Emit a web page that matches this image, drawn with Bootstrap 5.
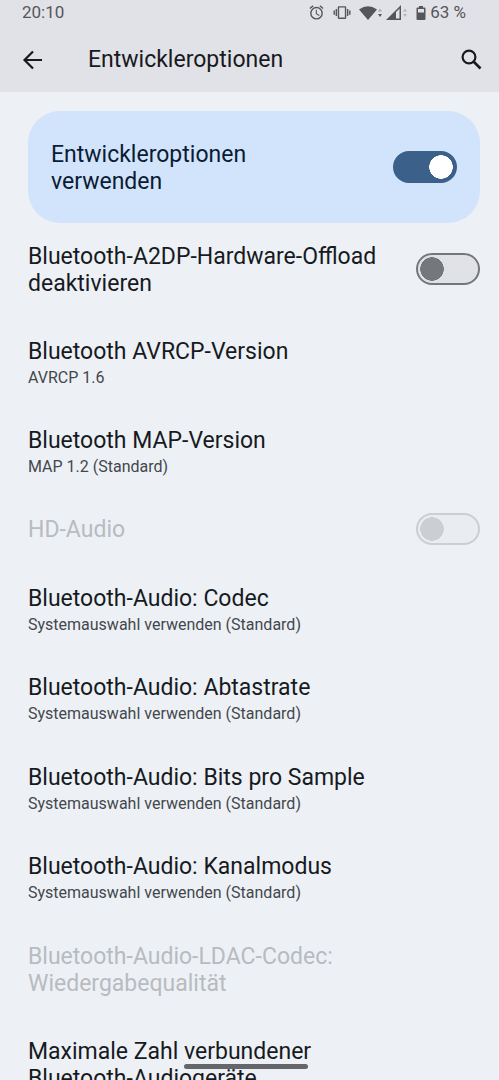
<!DOCTYPE html>
<html lang="de">
<head>
<meta charset="utf-8">
<meta name="viewport" content="width=device-width, initial-scale=1">
<title>Entwickleroptionen</title>
<link href="https://cdn.jsdelivr.net/npm/bootstrap@5.3.0/dist/css/bootstrap.min.css" rel="stylesheet">
<script src="https://cdn.jsdelivr.net/npm/bootstrap@5.3.0/dist/js/bootstrap.bundle.min.js" defer></script>
<style>
  body { background: #edf1f6; color: #171a1e; font-family: Roboto, "Noto Sans", sans-serif; }
  .top-area { background: #e1e2e7; }
  .status-bar { height: 25px; padding: 0 33px 0 22px; font-size: 17px; line-height: 25px; color: #55565a; }
  .status-bar svg { display: block; }
  .app-bar { height: 67px; padding: 2px 17px 0 22px; }
  .app-bar h1 { margin-left: 45px; }
  .app-bar svg { display: block; }
  .title-text { font-size: 23px; line-height: 27px; font-weight: 400; }
  .sub-text { font-size: 16px; line-height: 17px; margin-top: 4px; color: #44474c; }
  .master { margin: 19px 19px 0 28px; padding: 28px 23px; border-radius: 32px; background: #d2e4fc; color: #0a1c33; }
  .master label { max-width: 240px; padding-top: 2px; }
  .groups { gap: 1px; }
  .setting { padding: 20px 19px 21px 28px; background: transparent; border: 0; border-radius: 0; color: inherit; }
  .setting label { max-width: 360px; }
  .setting:disabled, .setting.off { color: #b8bbc0; }
  .form-check-input.toggle {
    width: 64px; height: 32px; margin: 0; border: 2px solid #74777c; border-radius: 16px;
    background: #e1e2e7 radial-gradient(circle closest-side, #74777c 96%, transparent) 2px center / 24px 24px no-repeat;
  }
  .setting .form-check-input.toggle { margin-bottom: 3px; }
  .form-check-input.toggle:checked {
    border-color: #3b618b;
    background: #3b618b radial-gradient(circle closest-side, #fff 96%, transparent) 34px center / 24px 24px no-repeat;
  }
  .form-check-input.toggle:disabled {
    opacity: 1; border-color: #cbced3;
    background: #e9ecf1 radial-gradient(circle closest-side, #cbced3 96%, transparent) 2px center / 24px 24px no-repeat;
  }
  .home-bar { bottom: 11px; padding-right: 8px; }
  .home-pill { width: 124px; height: 5px; background: #65666a; }
</style>
</head>
<body class="vh-100 overflow-hidden">
<header class="top-area">
  <div class="status-bar d-flex justify-content-between align-items-center">
    <span>20:10</span>
    <div class="d-flex align-items-center">
      <svg class="me-2" width="17" height="17" viewBox="0 0 24 24" fill="#55565a" aria-hidden="true"><path d="M22 5.7l-4.6-3.9-1.3 1.5 4.6 3.9zM7.9 3.4L6.6 1.9 2 5.7l1.3 1.5zM12.5 8H11v6l4.7 2.9.8-1.3-4-2.3zM12 4a9 9 0 1 0 0 18 9 9 0 0 0 0-18zm0 16a7 7 0 1 1 0-14 7 7 0 0 1 0 14z"/></svg>
      <svg class="me-2" width="18" height="17" viewBox="0 0 24 24" fill="#55565a" aria-hidden="true"><path d="M0 15h2V9H0zm3 2h2V7H3zm19-8v6h2V9zm-3 8h2V7h-2zM16.500 3h-9C6.700 3 6 3.700 6 4.500v15c0 .8.7 1.500 1.500 1.500h9c.8 0 1.500-.7 1.500-1.500v-15c0-.8-.7-1.500-1.500-1.500zM16 19H8V5h8z"/></svg>
      <svg width="27" height="16" viewBox="0 0 27 16" fill="#55565a" aria-hidden="true"><path d="M0 4.500Q9 -2 18 4.500L9 15z"/><path d="M19 6.500l2-3 2 3z" fill="#a9aaae"/><path d="M19 9h4l-2 3z"/></svg>
      <svg width="30" height="16" viewBox="0 0 30 16" fill="#55565a" aria-hidden="true"><path d="M0 15L15 0v15zM10 7v6.500h3.500V3.500z" fill-rule="evenodd"/><path d="M17 6.500l2-3 2 3zM17 9h4l-2 3z" fill="#b4b5b9"/></svg>
      <svg class="me-1" width="10" height="16" viewBox="0 0 10 16" fill="#55565a" aria-hidden="true"><path fill-rule="evenodd" d="M3 1h4v1.500h1.500q1 0 1 1V14q0 1-1 1h-7q-1 0-1-1V3.500q0-1 1-1H3zM2 4v3.500h6V4z"/></svg>
      <span>63 %</span>
    </div>
  </div>
  <div class="app-bar d-flex align-items-center">
    <button type="button" class="btn p-0 border-0" aria-label="Zurück">
      <svg width="21" height="20" viewBox="0 0 21 20" fill="none" stroke="#171a1e" stroke-width="2.200" aria-hidden="true"><path d="M20 10H3M11 1.500L2.500 10l8.500 8.500"/></svg>
    </button>
    <h1 class="title-text mb-0 flex-grow-1">Entwickleroptionen</h1>
    <button type="button" class="btn p-0 border-0" aria-label="Suchen">
      <svg width="21" height="21" viewBox="0 0 21 21" fill="none" stroke="#171a1e" stroke-width="2.200" aria-hidden="true"><circle cx="8" cy="8" r="6.400"/><path d="M12.500 12.500l7 7" stroke-width="2.600"/></svg>
    </button>
  </div>
</header>
<main>
  <div class="master d-flex align-items-center justify-content-between">
    <label class="title-text" for="sw-dev">Entwickleroptionen verwenden</label>
    <input class="form-check-input toggle flex-shrink-0" type="checkbox" role="switch" id="sw-dev" checked>
  </div>
  <div class="groups d-flex flex-column">
    <section>
      <div class="setting d-flex align-items-center justify-content-between">
        <label class="title-text" for="sw-offload">Bluetooth-A2DP-Hardware-Offload deaktivieren</label>
        <input class="form-check-input toggle flex-shrink-0" type="checkbox" role="switch" id="sw-offload">
      </div>
      <button type="button" class="setting d-block w-100 text-start">
        <span class="title-text d-block">Bluetooth AVRCP-Version</span>
        <span class="sub-text d-block">AVRCP 1.6</span>
      </button>
      <button type="button" class="setting d-block w-100 text-start">
        <span class="title-text d-block">Bluetooth MAP-Version</span>
        <span class="sub-text d-block">MAP 1.2 (Standard)</span>
      </button>
      <div class="setting off py-0 d-flex align-items-center justify-content-between">
        <label class="title-text setting px-0" for="sw-hd">HD-Audio</label>
        <input class="form-check-input toggle flex-shrink-0" type="checkbox" role="switch" id="sw-hd" disabled>
      </div>
    </section>
    <section>
      <button type="button" class="setting d-block w-100 text-start">
        <span class="title-text d-block">Bluetooth-Audio: Codec</span>
        <span class="sub-text d-block">Systemauswahl verwenden (Standard)</span>
      </button>
      <button type="button" class="setting d-block w-100 text-start">
        <span class="title-text d-block">Bluetooth-Audio: Abtastrate</span>
        <span class="sub-text d-block">Systemauswahl verwenden (Standard)</span>
      </button>
    </section>
    <section>
      <button type="button" class="setting d-block w-100 text-start">
        <span class="title-text d-block">Bluetooth-Audio: Bits pro Sample</span>
        <span class="sub-text d-block">Systemauswahl verwenden (Standard)</span>
      </button>
      <button type="button" class="setting d-block w-100 text-start">
        <span class="title-text d-block">Bluetooth-Audio: Kanalmodus</span>
        <span class="sub-text d-block">Systemauswahl verwenden (Standard)</span>
      </button>
    </section>
    <section>
      <button type="button" class="setting d-block w-100 text-start" disabled>
        <span class="title-text d-block">Bluetooth-Audio-LDAC-Codec:<br>Wiedergabequalität</span>
      </button>
      <button type="button" class="setting d-block w-100 text-start">
        <span class="title-text d-block">Maximale Zahl verbundener<br>Bluetooth-Audiogeräte</span>
      </button>
    </section>
  </div>
</main>
<div class="home-bar position-fixed start-0 w-100 d-flex justify-content-center pe-none">
  <div class="home-pill rounded-pill"></div>
</div>
</body>
</html>
